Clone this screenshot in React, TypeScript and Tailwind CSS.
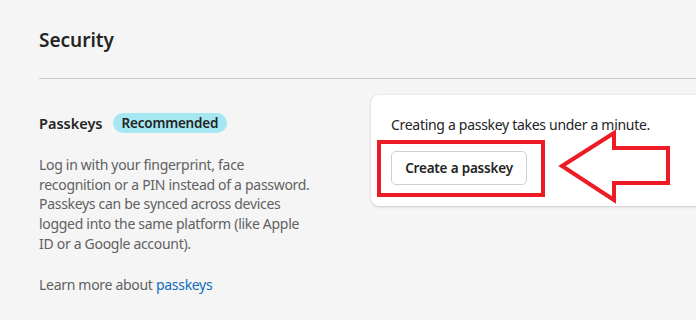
export default function App() {
  return (
    <div className="relative w-[696px] h-[320px] overflow-hidden bg-[#f5f5f5] text-[#242424] font-['Segoe_UI','Noto_Sans',sans-serif]">
      <div className="pl-[39px] pt-[26px]">
        <h2 className="text-[19px] leading-[28px] font-semibold">Security</h2>
        <div className="mt-[24px] h-px bg-[#cccccc]" />

        <div className="flex">
          {/* left column */}
          <div className="w-[332px] shrink-0 pt-[34px]">
            <div className="flex items-center gap-[10px]">
              <span className="text-[14.5px] leading-[20px] font-semibold">Passkeys</span>
              <span className="rounded-full bg-[#a6e8f2] px-[9px] text-[13.5px] leading-[20px] font-semibold tracking-[-0.2px]">
                Recommended
              </span>
            </div>
            <p className="mt-[22px] whitespace-nowrap text-[14px] leading-[19.7px] tracking-[-0.3px] text-[#616161]">
              Log in with your fingerprint, face
              <br />
              recognition or a PIN instead of a password.
              <br />
              Passkeys can be synced across devices
              <br />
              logged into the same platform (like Apple
              <br />
              ID or a Google account).
            </p>
            <p className="mt-[21px] text-[14px] leading-[20px] tracking-[-0.3px] text-[#616161]">
              Learn more about <a className="text-[#0f6cbd]">passkeys</a>
            </p>
          </div>

          {/* card */}
          <div className="mt-[16px] w-[360px] shrink-0 self-start rounded-[8px] bg-white px-[20px] pt-[20px] pb-[21px] shadow-[0_1px_3px_rgba(0,0,0,0.14),0_0_2px_rgba(0,0,0,0.1)]">
            <p className="text-[14px] leading-[20px] tracking-[-0.3px]">Creating a passkey takes under a minute.</p>
            <button className="mt-[16px] h-[34px] w-[136px] rounded-[5px] border border-[#d1d1d1] bg-white text-[13.5px] font-semibold tracking-[-0.2px]">
              Create a passkey
            </button>
          </div>
        </div>
      </div>

      {/* annotation overlay */}
      <svg className="pointer-events-none absolute left-0 top-0" width="696" height="320">
        <rect x="379" y="142" width="164" height="53" fill="none" stroke="#ed1c24" strokeWidth="4" />
        <polygon
          points="562,166 614,133 614,148 668,148 668,183 614,183 614,200"
          fill="none"
          stroke="#ed1c24"
          strokeWidth="4"
          strokeLinejoin="miter"
        />
      </svg>
    </div>
  );
}
